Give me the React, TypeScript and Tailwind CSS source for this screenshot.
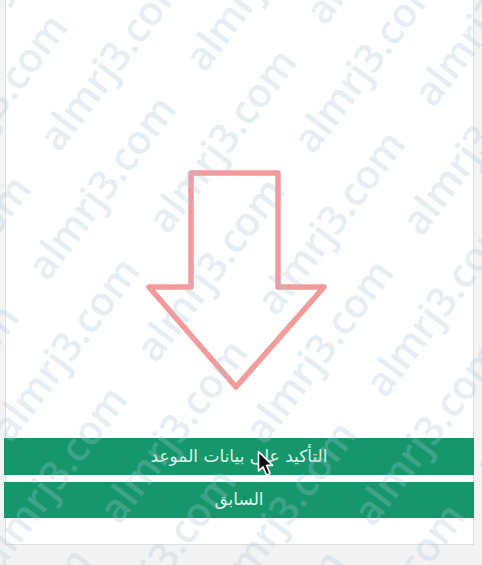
import React from "react";

const rows = Array.from({ length: 22 });
const perRow = Array.from({ length: 8 });

function Watermark() {
  return (
    <div className="pointer-events-none absolute inset-0 z-10 overflow-hidden">
      <div className="absolute left-1/2 top-1/2 flex w-[1800px] -translate-x-1/2 -translate-y-1/2 -rotate-[53deg] flex-col gap-[24px]">
        {rows.map((_, i) => (
          <div
            key={i}
            className={
              "flex gap-[44px] whitespace-nowrap text-[40px] font-semibold leading-[44px] text-[#a9c3d8]/30 [font-family:'Open_Sans',sans-serif] " +
              (i % 2 === 0 ? "ml-0" : "ml-[110px]")
            }
          >
            {perRow.map((_, j) => (
              <span key={j}>almrj3.com</span>
            ))}
          </div>
        ))}
      </div>
    </div>
  );
}

function Cursor() {
  return (
    <svg
      className="pointer-events-none absolute left-[257px] top-[450px] z-20"
      width="20"
      height="28"
      viewBox="0 0 20 28"
    >
      <path
        d="M1.5 1.5 L1.5 21 L6 16.8 L9.5 25 L13 23.4 L9.6 15.4 L15.6 15.4 Z"
        fill="#111"
        stroke="#fff"
        strokeWidth="1.6"
        strokeLinejoin="round"
      />
    </svg>
  );
}

export default function App() {
  return (
    <div className="relative h-[565px] w-[482px] overflow-hidden bg-[#f3f3f3] [font-family:'DejaVu_Sans',sans-serif]">
      <div className="ml-[5px] flex h-[545px] w-[469px] flex-col border-x border-b border-[#dedede] bg-white">
        <svg
          className="ml-[140px] mt-[170px]"
          width="182"
          height="222"
          viewBox="145 170 182 222"
        >
          <path
            d="M190 173 L277 173 L277 287 L323 287 L235 387 L148 287 L190 287 Z"
            fill="none"
            stroke="#f49a9a"
            strokeWidth="5.5"
            strokeLinejoin="round"
          />
        </svg>
        <div className="-ml-[2px] mt-[46px] flex w-[470px] flex-col gap-[7px]">
          <button className="flex h-[37px] items-center justify-center bg-[#16976b] text-[17px] text-[#dff3e8]" dir="rtl">
            التأكيد على بيانات الموعد
          </button>
          <button className="flex h-[36px] items-center justify-center bg-[#16976b] text-[17px] text-[#dff3e8]" dir="rtl">
            السابق
          </button>
        </div>
      </div>
      <Watermark />
      <Cursor />
    </div>
  );
}
